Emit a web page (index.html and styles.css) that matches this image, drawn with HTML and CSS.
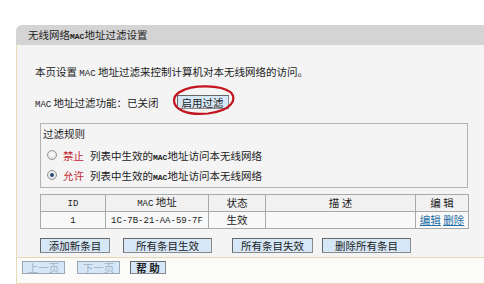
FILE: index.html
```html
<!DOCTYPE html>
<html>
<head>
<meta charset="utf-8">
<link rel="stylesheet" href="styles.css">
</head>
<body>
<div class="card">
  <div class="titlebar">无线网络<span class="m mt">MAC</span>地址过滤设置</div>
  <div class="content">
    <p class="line1">本页设置 <span class="m">MAC</span> 地址过滤来控制计算机对本无线网络的访问。</p>
    <div class="line2">
      <span><span class="m">MAC</span> 地址过滤功能：已关闭</span>
      <span class="btnwrap">
        <span class="btn b-enable">启用过滤</span>
        <svg class="circle" viewBox="0 0 64 32" aria-hidden="true">
          <path d="M9 7 C 20 0, 49 0, 59 8 C 65 15, 60 26, 36 29 C 15 31, 2 25, 2 16 C 2 10, 9 5, 20 3" fill="none" stroke="#c4141f" stroke-width="2.2" stroke-linecap="round"/>
        </svg>
      </span>
    </div>
    <div class="rules">
      <div class="rules-title">过滤规则</div>
      <div class="rrow"><span class="radio"></span><span class="red">禁止</span><span>列表中生效的<span class="m ms">MAC</span>地址访问本无线网络</span></div>
      <div class="rrow"><span class="radio on"></span><span class="red">允许</span><span>列表中生效的<span class="m ms">MAC</span>地址访问本无线网络</span></div>
    </div>
    <table class="list">
      <colgroup>
        <col class="c1"><col class="c2"><col class="c3"><col class="c4"><col class="c5">
      </colgroup>
      <tr class="head">
        <th><span class="m">ID</span></th>
        <th><span class="m">MAC</span> 地址</th>
        <th>状态</th>
        <th>描 述</th>
        <th>编 辑</th>
      </tr>
      <tr class="data">
        <td><span class="m">1</span></td>
        <td><span class="m">1C-7B-21-AA-59-7F</span></td>
        <td>生效</td>
        <td></td>
        <td><a class="lnk">编辑</a> <a class="lnk">删除</a></td>
      </tr>
    </table>
    <div class="actions">
      <span class="btn a1">添加新条目</span>
      <span class="btn a2">所有条目生效</span>
      <span class="btn a3">所有条目失效</span>
      <span class="btn a4">删除所有条目</span>
    </div>
  </div>
  <div class="footer">
    <span class="btn fbtn dis f1">上一页</span>
    <span class="btn fbtn dis f2">下一页</span>
    <span class="btn fbtn f3">帮 助</span>
  </div>
</div>
</body>
</html>
```

FILE: styles.css
```css
* { box-sizing: border-box; }
html, body { margin: 0; background: #ffffff; }
body {
  padding: 25px 0 0 16px;
  font-family: "Noto Sans CJK SC", "Noto Sans", sans-serif;
  font-size: 10.5px;
  color: #222;
}
.m { font-family: "Liberation Mono", monospace; font-size: 9px; }
.mt { font-size: 8px; font-weight: bold; }
.ms { font-size: 8px; font-weight: bold; }

.card { width: 468px; }
.titlebar {
  height: 20px;
  line-height: 20px;
  background: #d4d4d4;
  padding-left: 12px;
  border-top-left-radius: 6px;
  color: #1e1e1e;
}
.content {
  background: #f4f4f4;
  border-left: 1px solid #e9dab9;
  padding: 20px 0 4px 18px;
}
.line1 { margin: 0; height: 14px; line-height: 14px; }
.line2 {
  margin-top: 16px;
  height: 14px;
  display: flex;
  align-items: center;
}
.btnwrap { position: relative; display: flex; margin-left: 18px; }
.btn {
  display: inline-flex;
  align-items: center;
  justify-content: center;
  height: 15px;
  background: #d6e8f8;
  border: 1px solid #666;
  border-right-color: #8a8a8a;
  border-bottom-color: #8a8a8a;
  color: #222;
  white-space: nowrap;
}
.b-enable { width: 52px; height: 14px; }
.circle {
  position: absolute;
  left: -5px;
  top: -11px;
  width: 64px;
  height: 33px;
  overflow: visible;
}

.rules {
  margin: 14px 0 0 5px;
  width: 428px;
  border: 1px solid #b3b3b3;
  padding: 3px 0 2px 2px;
}
.rules-title { height: 14px; line-height: 14px; margin-bottom: 4px; }
.rrow { display: flex; align-items: center; height: 20px; padding-left: 4px; }
.radio {
  position: relative;
  width: 10px;
  height: 10px;
  border-radius: 50%;
  border: 1px solid #939393;
  background: radial-gradient(circle at 50% 40%, #ffffff, #d9d9d9);
  margin-right: 6px;
}
.radio.on::after {
  content: "";
  position: absolute;
  left: 2px;
  top: 2px;
  width: 4px;
  height: 4px;
  border-radius: 50%;
  background: #2b4b74;
}
.red { color: #c3262c; margin-right: 6px; }

.list {
  margin: 6px 0 0 5px;
  width: 428px;
  border-collapse: collapse;
  table-layout: fixed;
}
.c1 { width: 65px; }
.c2 { width: 103px; }
.c3 { width: 57px; }
.c4 { width: 150px; }
.c5 { width: 53px; }
.list th, .list td {
  border: 1px solid #a9a9a9;
  text-align: center;
  font-weight: normal;
  padding: 0;
  line-height: 14px;
}
.head th { height: 17px; background: #f1f1f1; }
.data td { height: 16px; background: #f8f8f8; }
.lnk { color: #1f6fa6; text-decoration: underline; }

.actions { display: flex; margin: 9px 0 0 5px; height: 15px; }
.a1 { width: 70px; }
.a2 { width: 89px; margin-left: 13px; }
.a3 { width: 81px; margin-left: 20px; }
.a4 { width: 89px; margin-left: 9px; }

.footer {
  height: 27px;
  background: #fbfbf9;
  border-left: 1px solid #e9dab9;
  border-top: 1px solid #e4d7b3;
  border-bottom: 1px solid #e4d7b3;
  padding: 3px 0 0 5px;
  display: flex;
  align-items: flex-start;
}
.fbtn { height: 13px; width: 43px; }
.dis { color: #9fb3c6; border-color: #9aa6b0; }
.f2 { margin-left: 12px; }
.f3 { width: 36px; margin-left: 10px; font-weight: bold; color: #1a1a1a; }
```
